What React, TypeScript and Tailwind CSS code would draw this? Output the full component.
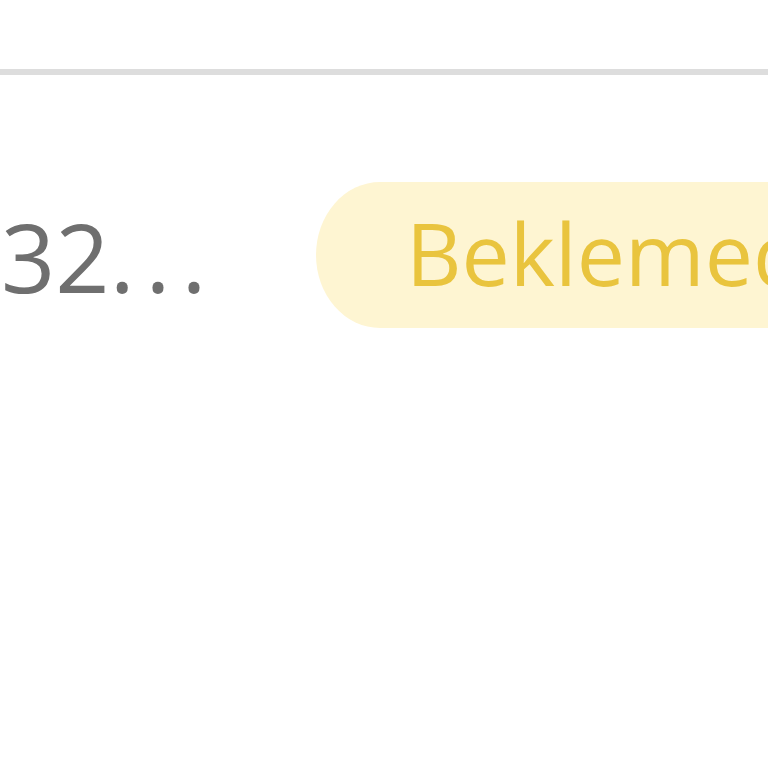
import React from "react";

export default function App() {
  return (
    <div
      className="w-[768px] h-[768px] overflow-hidden bg-white"
      style={{ fontFamily: '"Open Sans", "Noto Sans", sans-serif' }}
    >
      <div className="h-[69px]" />
      <div className="h-[6px] w-full bg-[#dddddd]" />
      {/* satir */}
      <div className="flex items-center mt-[107px] h-[146px] whitespace-nowrap">
        <div className="w-[316px] shrink-0 pl-[1px] text-[95px] leading-none text-[#6f6f6f] translate-y-[1px]">
          32<span className="tracking-[11px]">...</span>
        </div>
        <div className="shrink-0 h-[146px] flex items-center rounded-[64px/73px] bg-[#fef5d2] pl-[90px] pr-[88px]">
          <span className="text-[86px] leading-none text-[#e9c43e] -translate-y-[2px]">Beklemede</span>
        </div>
      </div>
    </div>
  );
}
